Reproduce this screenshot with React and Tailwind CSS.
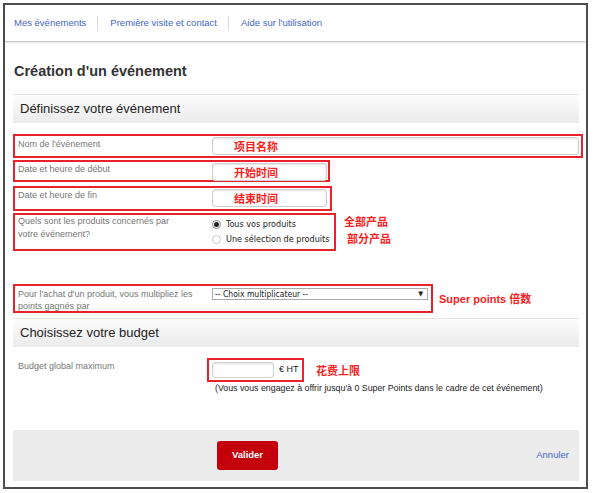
import React from 'react'

const cn = "font-['Noto_Sans_CJK_SC',sans-serif] font-bold text-[11px] leading-[14px] text-[#fa1e1e]"
const tahoma = "font-['DejaVu_Sans_Condensed','DejaVu_Sans',sans-serif]"

function Field({ width, children }) {
  return (
    <div
      className="h-[18px] rounded-[3px] border border-[#cfcfcf] bg-white shadow-[inset_0_1px_2px_rgba(0,0,0,0.12)] flex items-center pl-[21px]"
      style={{ width }}
    >
      {children}
    </div>
  )
}

function Radio({ checked, label }) {
  return (
    <div className="flex items-center h-[15px]">
      <span className={`w-[9px] h-[9px] rounded-full border flex items-center justify-center bg-white ${checked ? 'border-[#8a8a8a]' : 'border-[#c8c8c8]'}`}>
        {checked && <span className="w-[5px] h-[5px] rounded-full bg-[#222]" />}
      </span>
      <span className={`ml-[5px] text-[9px] text-[#222] ${tahoma}`}>{label}</span>
    </div>
  )
}

function SectionHeader({ children }) {
  return (
    <div className="ml-[8px] w-[566px] h-[29px] flex items-center pl-[7px] border-t border-[#e4e4e4] bg-gradient-to-b from-[#fcfcfc] to-[#ebebeb] text-[13px] text-[#222]">
      {children}
    </div>
  )
}

export default function App() {
  return (
    <div className="w-[598px] h-[493px] bg-white font-['Liberation_Sans',Arial,sans-serif] overflow-hidden">
      <div className="ml-[3px] mt-[3px] w-[585px] h-[486px] border-2 border-[#4d4d4d] bg-white flex flex-col">
        {/* nav */}
        <div className="h-[37px] shrink-0 flex items-center pl-[9px] border-b border-[#c9c9c9] shadow-[0_1px_1px_rgba(0,0,0,0.08)] mr-[1px] text-[9.5px] text-[#4466c8]">
          <span className="pr-[11px]">Mes événements</span>
          <span className="h-[15px] border-l border-[#dcdcdc] pl-[12px] pr-[11px] flex items-center">Première visite et contact</span>
          <span className="h-[15px] border-l border-[#dcdcdc] pl-[12px] flex items-center">Aide sur l'utilisation</span>
        </div>

        {/* title */}
        <div className="ml-[9px] mt-[20px] text-[14.5px] leading-[18px] font-bold text-[#333]">Création d'un événement</div>

        <div className="mt-[14px]">
          <SectionHeader>Définissez votre événement</SectionHeader>
        </div>

        {/* row 1 */}
        <div className="mt-[11px] ml-[8px] w-[570px] h-[24px] border-2 border-[#e8212a] flex items-start">
          <div className="w-[197px] pl-[3px] pt-[2px] text-[9px] leading-[12px] text-[#777]">Nom de l'évènement</div>
          <div className="mt-[1px]">
            <Field width={367}><span className={cn}>项目名称</span></Field>
          </div>
        </div>

        {/* row 2 */}
        <div className="mt-[2px] ml-[8px] w-[317px] h-[22px] border-2 border-[#e8212a] flex items-start">
          <div className="w-[197px] pl-[3px] pt-[1px] text-[9px] leading-[12px] text-[#777]">Date et heure de début</div>
          <div className="mt-[1px]">
            <Field width={115}><span className={cn}>开始时间</span></Field>
          </div>
        </div>

        {/* row 3 */}
        <div className="mt-[4px] ml-[8px] w-[319px] h-[25px] border-2 border-[#e8212a] flex items-start">
          <div className="w-[197px] pl-[3px] pt-[1px] text-[9px] leading-[12px] text-[#777]">Date et heure de fin</div>
          <div className="mt-[1px]">
            <Field width={115}><span className={cn}>结束时间</span></Field>
          </div>
        </div>

        {/* row 4 */}
        <div className="mt-[2px] ml-[8px] flex items-start">
          <div className="w-[323px] h-[38px] border-2 border-[#e8212a] flex items-start">
            <div className="w-[197px] pl-[3px] pt-[0px] text-[9px] leading-[13px] text-[#777]">
              Quels sont les produits concernés par<br />votre événement?
            </div>
            <div className="pt-[2px]">
              <Radio checked label="Tous vos produits" />
              <Radio label="Une sélection de produits" />
            </div>
          </div>
          <div className="pt-[0px]">
            <div className={`${cn} ml-[8px] mt-[1px]`}>全部产品</div>
            <div className={`${cn} ml-[11px] mt-[3px]`}>部分产品</div>
          </div>
        </div>

        {/* row 5 */}
        <div className="mt-[33px] ml-[8px] flex items-center">
          <div className="w-[420px] h-[29px] border-2 border-[#e8212a] flex items-start">
            <div className="w-[197px] pl-[3px] pt-[2px] text-[9px] leading-[12px] text-[#777]">
              Pour l'achat d'un produit, vous multipliez les<br />points gagnés par
            </div>
            <div className={`mt-[2px] w-[216px] h-[12px] border border-[#a9a9a9] bg-white flex items-center justify-between pl-[2px] pr-[4px] text-[8.5px] text-[#222] ${tahoma}`}>
              <span>-- Choix multiplicateur --</span>
              <span className="text-[7px]">▼</span>
            </div>
          </div>
          <div className={`${cn} ml-[6px]`}>
            <span className="font-['Liberation_Sans',sans-serif]">Super points </span>倍数
          </div>
        </div>

        <div className="mt-[5px]">
          <SectionHeader>Choisissez votre budget</SectionHeader>
        </div>

        {/* budget */}
        <div className="mt-[11px] ml-[8px] flex items-center h-[24px]">
          <div className="w-[194px] pl-[5px] text-[9px] text-[#777] -mt-[6px]">Budget global maximum</div>
          <div className="w-[97px] h-[24px] border-2 border-[#e8212a] flex items-center pl-[3px]">
            <div className="w-[62px] h-[16px] rounded-[3px] border border-[#cfcfcf] bg-white shadow-[inset_0_1px_2px_rgba(0,0,0,0.12)]" />
            <span className="ml-[5px] text-[9px] text-[#222]">€ HT</span>
          </div>
          <div className={`${cn} ml-[12px]`}>花费上限</div>
        </div>
        <div className="ml-[210px] h-[12px] text-[8.8px] leading-[12px] text-[#222]">
          (Vous vous engagez à offrir jusqu'à 0 Super Points dans le cadre de cet événement)
        </div>

        {/* footer */}
        <div className="mt-[36px] ml-[8px] w-[566px] h-[51px] bg-[#ececec] flex items-center pl-[204px] pr-[10px]">
          <button className="w-[61px] h-[29px] rounded-[3px] bg-[#c4000b] text-white text-[9.5px] font-bold">Valider</button>
          <span className="ml-auto text-[9.5px] text-[#4466c8]">Annuler</span>
        </div>
      </div>
    </div>
  )
}
